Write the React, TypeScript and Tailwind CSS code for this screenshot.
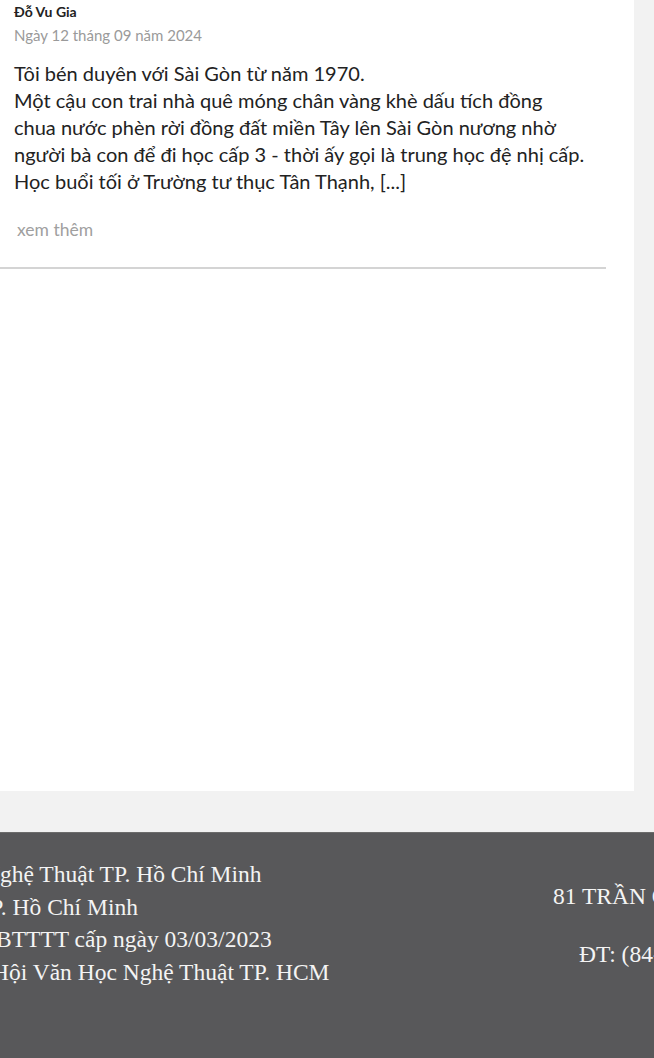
const bodyLines = [
  "Một cậu con trai nhà quê móng chân vàng khè dấu tích đồng",
  "chua nước phèn rời đồng đất miền Tây lên Sài Gòn nương nhờ",
  "người bà con để đi học cấp 3 - thời ấy gọi là trung học đệ nhị cấp.",
  "Học buổi tối ở Trường tư thục Tân Thạnh, [...]",
];

export default function App() {
  return (
    <div className="h-[1058px] w-[654px] overflow-hidden bg-[#f2f2f2]">
      <div className="h-[791px] w-[634px] bg-white">
        <div className="w-[606px] border-b-2 border-[#d4d4d4] pb-[27px] pl-[14px] pt-[3px] font-['Lato',sans-serif]">
          <h3 className="text-[14px] font-bold leading-[18px] text-[#222]">Đỗ Vu Gia</h3>
          <p className="mt-[5px] text-[15px] leading-[18px] text-[#9a9a9a]">Ngày 12 tháng 09 năm 2024</p>
          <div className="mt-[16px] whitespace-nowrap text-[20px] leading-[27px] text-[#222]">
            <p>Tôi bén duyên với Sài Gòn từ năm 1970.</p>
            {bodyLines.map((line) => (
              <p key={line}>{line}</p>
            ))}
          </div>
          <p className="mt-[25px] pl-[3px] text-[17.5px] leading-[20px] text-[#a0a0a0]">xem thêm</p>
        </div>
      </div>

      <footer className="mt-[41px] flex h-[227px] border-t border-[#6c6c6c] bg-[#58585a] font-['Liberation_Serif',serif] text-[23.5px] text-[#f4f4f4]">
        <div className="w-[400px] overflow-hidden whitespace-nowrap pt-[25px] leading-[32.5px]">
          <p className="ml-[-17px]">Nghệ Thuật TP. Hồ Chí Minh</p>
          <p className="ml-[-24px]">TP. Hồ Chí Minh</p>
          <p className="ml-[-4px]">BTTTT cấp ngày 03/03/2023</p>
          <p className="ml-[-8px]">Hội Văn Học Nghệ Thuật TP. HCM</p>
        </div>
        <div className="flex-1 overflow-hidden whitespace-nowrap pt-[47px] leading-[32px]">
          <p className="ml-[153px]">81 TRẦN QUỐC THẢO</p>
          <p className="ml-[179px] mt-[26px]">ĐT: (84-28) 3930 6813</p>
        </div>
      </footer>
    </div>
  );
}
